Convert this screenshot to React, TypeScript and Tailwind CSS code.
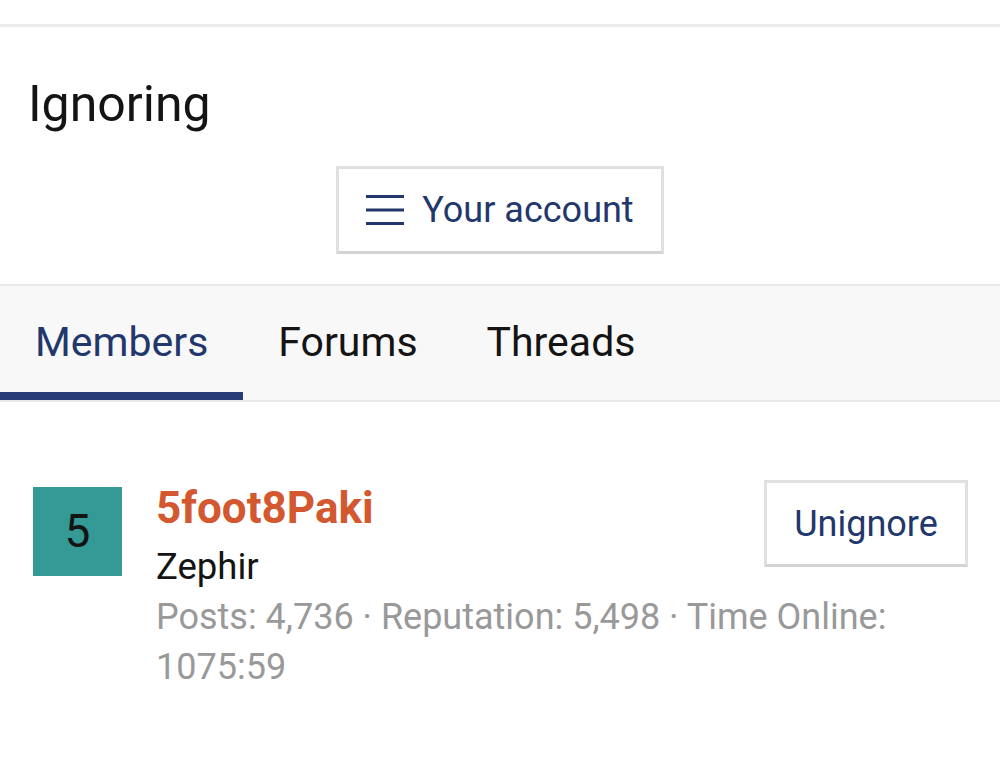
import React from "react";

export default function App() {
  return (
    <div className="w-[1000px] h-[782px] bg-white overflow-hidden font-['Roboto',sans-serif] text-[#141414]">
      <div className="h-[24px]" />
      <div className="border-t-[3px] border-[#ebebeb]" />
      <h1 className="mt-[47px] pl-[28px] text-[50px] leading-[60px] font-normal">Ignoring</h1>
      <div className="mt-[32px] flex justify-center">
        <button className="h-[88px] flex items-center gap-[18px] px-[27px] border-[3px] border-[#e0e0e0] border-b-[#d3d3d3] bg-white text-[#22376b] text-[36px] leading-none">
          <svg width="38" height="32" viewBox="0 0 38 32" className="block">
            <rect x="0" y="1" width="38" height="3" fill="#22376b" />
            <rect x="0" y="14.5" width="38" height="3" fill="#22376b" />
            <rect x="0" y="28" width="38" height="3" fill="#22376b" />
          </svg>
          <span>Your account</span>
        </button>
      </div>
      <div className="mt-[30px] border-t-2 border-b-2 border-[#e8e8e8] bg-[#f8f8f8] flex">
        <div className="h-[114px] px-[35px] pt-[7px] flex items-center border-b-[8px] border-[#283c78] text-[41px] text-[#22376b]">
          Members
        </div>
        <div className="h-[114px] px-[35px] pt-[7px] flex items-center border-b-[8px] border-transparent text-[41px]">
          Forums
        </div>
        <div className="h-[114px] px-[34px] pt-[7px] flex items-center border-b-[8px] border-transparent text-[41px]">
          Threads
        </div>
      </div>
      <div className="pt-[78px] pl-[33px] pr-[32px] flex gap-[34px]">
        <div className="mt-[7px] w-[89px] h-[89px] shrink-0 bg-[#359a96] flex items-center justify-center text-[46px] text-[#141414]">
          5
        </div>
        <div className="flex-1 min-w-0">
          <button className="float-right ml-[20px] w-[204px] h-[87px] border-[3px] border-[#e0e0e0] border-b-[#d3d3d3] bg-white text-[#22376b] text-[36px] leading-none">
            Unignore
          </button>
          <div className="text-[44px] leading-[56px] font-bold text-[#d3582f]">5foot8Paki</div>
          <div className="mt-[6px] text-[36.5px] leading-[50px] text-[#141414]">Zephir</div>
          <div className="text-[36px] leading-[50px] text-[#999999]">
            Posts: 4,736 · Reputation: 5,498 · Time Online: 1075:59
          </div>
        </div>
      </div>
    </div>
  );
}
